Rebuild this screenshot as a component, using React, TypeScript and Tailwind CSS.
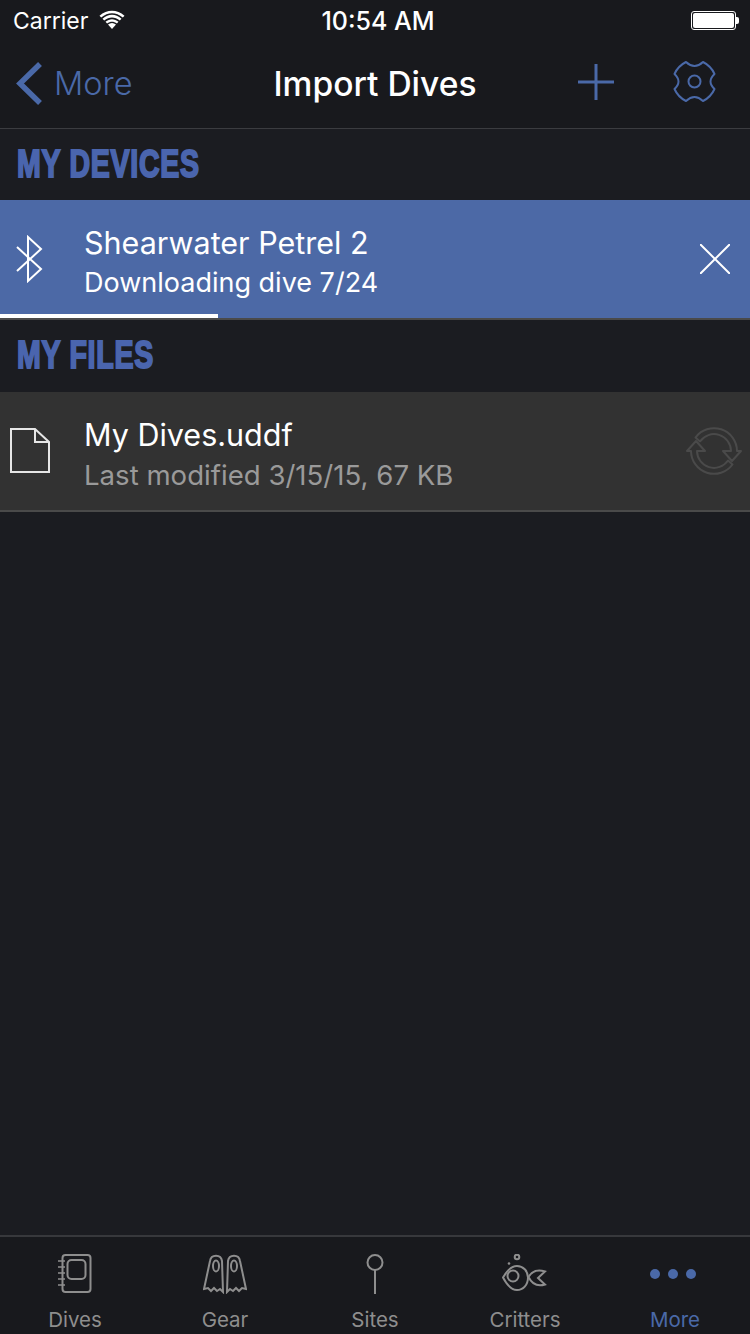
import React from 'react';

const sf = 'font-["Inter","Liberation_Sans",sans-serif]';

function BackIcon() {
  return (
    <svg width="28" height="44" viewBox="0 0 28 44" fill="none" stroke="#4a69a8" strokeWidth="5.500">
      <path d="M25 2 L5 21.5 L25 41" />
    </svg>
  );
}

function GearIcon() {
  return (
    <svg width="44" height="44" viewBox="0 0 44 44" fill="none" stroke="#4a69a8" strokeWidth="2">
      <path d="M13 2 Q21.500 10 30 2 Q38 6 41.500 14 Q33.500 21.500 41.500 29 Q38 37 30 41 Q21.500 33 13 41 Q5 37 1.500 29 Q9.500 21.500 1.500 14 Q5 6 13 2 Z" strokeLinejoin="round" />
      <circle cx="21.500" cy="21.500" r="6" />
    </svg>
  );
}

function StatusBar() {
  return (
    <div className="h-10 pt-[2px] flex items-center justify-between pl-[13px] pr-[11px] bg-[#18191d] text-white relative">
      <div className="flex items-center gap-[11px]">
        <span className="text-[23px] leading-none">Carrier</span>
        <svg width="26" height="20" viewBox="0 0 26 20" fill="white" className="-mt-[2px]">
          <path d="M13 19 L9 14.500 C11.500 12.500 14.500 12.500 17 14.500 Z" />
          <path d="M6.500 11.800 C10.500 8.300 15.500 8.300 19.500 11.800 L17.900 13.500 C14.800 11 11.200 11 8.100 13.500 Z" />
          <path d="M3.500 8.800 C9.500 3.500 16.500 3.500 22.500 8.800 L20.800 10.600 C15.800 6.400 10.200 6.400 5.200 10.600 Z" />
          <path d="M0.500 5.700 C8 -1 18 -1 25.500 5.700 L23.800 7.500 C17 1.700 9 1.700 2.200 7.500 Z" />
        </svg>
      </div>
      <span className="absolute left-[6px] right-0 text-center text-[25px] leading-none font-medium">10:54 AM</span>
      <div className="flex items-center -mt-[2px]">
        <div className="w-[45px] h-[19px] rounded-[3px] border border-white p-[1px]">
          <div className="w-full h-full rounded-[2px] bg-white" />
        </div>
        <div className="w-[3px] h-[7px] rounded-r-[2px] bg-white" />
      </div>
    </div>
  );
}

function NavBar() {
  return (
    <div className="h-[89px] border-b border-[#3b3c40] bg-[#18191d] flex items-center relative">
      <div className="pl-[15px] flex items-center text-[#4a69a8] gap-[11px]">
        <BackIcon />
        <span className="text-[32.500px] leading-none font-light">More</span>
      </div>
      <span className="absolute left-0 right-0 text-center text-white text-[33.600px] leading-none font-medium">Import Dives</span>
      <div className="ml-auto flex items-center">
        <svg width="36" height="36" viewBox="0 0 36 36" stroke="#4a69a8" strokeWidth="3" className="mr-[59px] -mt-1">
          <path d="M18 0 V36 M0 18 H36" />
        </svg>
        <div className="mr-[33px] -mt-1"><GearIcon /></div>
      </div>
    </div>
  );
}

function SectionHeader({ title, height }: { title: string; height: string }) {
  return (
    <div className={`${height} pl-[17px] pb-[2px] flex items-center`}>
      <span className="origin-left scale-x-[0.75] font-['Liberation_Sans',sans-serif] font-bold text-[38px] leading-none text-[#4a65ae] [-webkit-text-stroke:2px_#4a65ae] tracking-[1px] whitespace-nowrap">
        {title}
      </span>
    </div>
  );
}

function BluetoothIcon() {
  return (
    <svg width="30" height="48" viewBox="0 0 30 48" fill="none" stroke="white" strokeWidth="2">
      <path d="M2 12 L26 34 L13 46 V2 L26 14 L2 36" />
    </svg>
  );
}

function FileIcon() {
  return (
    <svg width="40" height="46" viewBox="0 0 40 46" fill="none" stroke="#e6e6e6" strokeWidth="2">
      <path d="M1 1 H25 L39 14 V44 H1 Z" />
      <path d="M25 1 V14 H39" />
    </svg>
  );
}

function SyncIcon() {
  const band = 'M9.500 10.500 A23 23 0 0 1 51 24 L55 24 L46 34 L37 24 L45 24 A17 17 0 0 0 14 14.500 Z';
  return (
    <svg width="56" height="48" viewBox="0 0 56 48" fill="none" stroke="#4a4a4a" strokeWidth="2" strokeLinejoin="round">
      <path d={band} />
      <path d={band} transform="rotate(180 28 24)" />
    </svg>
  );
}

function DivesIcon() {
  return (
    <svg width="34" height="40" viewBox="0 0 34 40" fill="none" stroke="#8e8e8e" strokeWidth="2">
      <rect x="4.500" y="1" width="28" height="37" rx="3" />
      <rect x="9.500" y="6" width="18" height="19" rx="4" />
      <path d="M0 7 H7 M0 13 H7 M0 19 H7 M0 25 H7 M0 31 H7" strokeWidth="1.500" />
    </svg>
  );
}

function GearTabIcon() {
  return (
    <svg width="44" height="40" viewBox="0 0 44 40" fill="none" stroke="#8e8e8e" strokeWidth="2">
      <path d="M1 35 L7 7 C8 0 18 0 19 7 L20 38 L17 35 L14 37 L11 34 L8 37 L5 34 L1 35 Z" />
      <path d="M43 35 L37 7 C36 0 26 0 25 7 L24 38 L27 35 L30 37 L33 34 L36 37 L39 34 L43 35 Z" />
      <ellipse cx="13" cy="12" rx="3" ry="5.500" />
      <ellipse cx="31" cy="12" rx="3" ry="5.500" />
    </svg>
  );
}

function SitesIcon() {
  return (
    <svg width="18" height="40" viewBox="0 0 18 40" fill="none" stroke="#8e8e8e" strokeWidth="2">
      <circle cx="9" cy="8.500" r="7.500" />
      <path d="M9 16 V40" />
    </svg>
  );
}

function CrittersIcon() {
  return (
    <svg width="46" height="40" viewBox="0 0 46 40" fill="none" stroke="#8e8e8e" strokeWidth="2">
      <circle cx="15" cy="3" r="2.300" />
      <circle cx="7" cy="9.500" r="1.300" fill="#8e8e8e" stroke="none" />
      <path d="M1 23.500 C6 15 11 12 15 12 C21 12 26 17 26 23.500 C26 31 21 36 15 36 C10 36 5 31 1 23.500 Z" />
      <circle cx="11" cy="22" r="5.500" />
      <path d="M26.500 23 Q32 14 43 17.500 L36 24 L43 30.500 Q32 34 26.500 23" />
    </svg>
  );
}

function MoreIcon() {
  return (
    <div className="flex items-center gap-[8px] h-[40px] -ml-[4px]">
      <div className="w-[10px] h-[10px] rounded-full bg-[#4a69a8]" />
      <div className="w-[10px] h-[10px] rounded-full bg-[#4a69a8]" />
      <div className="w-[10px] h-[10px] rounded-full bg-[#4a69a8]" />
    </div>
  );
}

const tabs = [
  { label: 'Dives', icon: <DivesIcon /> },
  { label: 'Gear', icon: <GearTabIcon /> },
  { label: 'Sites', icon: <SitesIcon /> },
  { label: 'Critters', icon: <CrittersIcon /> },
  { label: 'More', icon: <MoreIcon />, active: true },
];

export default function App() {
  return (
    <div className={`w-[750px] h-[1334px] bg-[#1b1c21] flex flex-col overflow-hidden ${sf}`}>
      <StatusBar />
      <NavBar />

      <SectionHeader title="MY DEVICES" height="h-[71px]" />
      <div className="h-[120px] bg-[#4c69a6] border-b-2 border-[#4a4a4a] relative flex items-center">
        <div className="w-[85px] pl-[15px] shrink-0"><BluetoothIcon /></div>
        <div className="text-white pt-[8px] -ml-[1px]">
          <div className="text-[30.500px] leading-[40px]">Shearwater Petrel 2</div>
          <div className="text-[27px] leading-[40px]">Downloading dive 7/24</div>
        </div>
        <svg width="30" height="30" viewBox="0 0 30 30" stroke="white" strokeWidth="2" className="ml-auto mr-[20px]">
          <path d="M0 0 L30 30 M30 0 L0 30" />
        </svg>
        <div className="absolute left-0 bottom-0 w-[218px] h-1 bg-white" />
      </div>

      <SectionHeader title="MY FILES" height="h-[72px]" />
      <div className="h-[120px] bg-[#323232] border-b-2 border-[#4a4a4a] flex items-center">
        <div className="w-[85px] pl-[10px] shrink-0"><FileIcon /></div>
        <div className="pt-[8px] -ml-[1px]">
          <div className="text-white text-[30.500px] leading-[40px]">My Dives.uddf</div>
          <div className="text-[#9a9a9a] text-[27.600px] leading-[40px]">Last modified 3/15/15, 67 KB</div>
        </div>
        <div className="ml-auto mr-[8px]"><SyncIcon /></div>
      </div>

      <div className="flex-1" />

      <div className="h-[99px] border-t-2 border-[#37383c] bg-[#18191d] grid grid-cols-5">
        {tabs.map((tab) => (
          <div key={tab.label} className="flex flex-col items-center pt-[17px]">
            <div className="h-[40px] flex items-center justify-center">{tab.icon}</div>
            <span className={`mt-[13px] text-[20.500px] leading-[26px] ${tab.active ? 'text-[#4a69a8]' : 'text-[#8e8e8e]'}`}>
              {tab.label}
            </span>
          </div>
        ))}
      </div>
    </div>
  );
}
